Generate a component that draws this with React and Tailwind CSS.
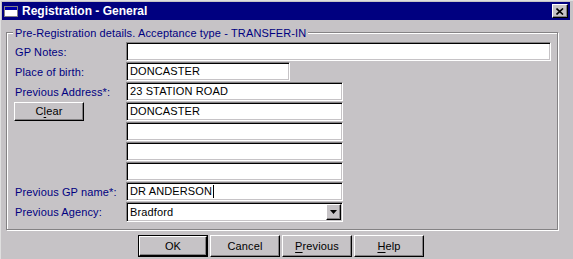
import React from "react";

const sunken =
  "border border-t-[#848284] border-l-[#848284] border-b-white border-r-white shadow-[inset_1px_1px_0_#000,inset_-1px_-1px_0_#c6c3c6]";
const raised =
  "border border-t-white border-l-white border-b-black border-r-black shadow-[inset_-1px_-1px_0_#848284]";

function Field({ w, children }) {
  return (
    <div className={`h-[19px] bg-white ${sunken} flex items-center pl-[3px] text-black ${w}`}>
      {children}
    </div>
  );
}

function Row({ label, children, left }) {
  return (
    <div className="h-[20px] flex items-start">
      <div className="w-[111px] h-[19px] flex items-center text-[#000080] shrink-0 pt-[1px]">
        {left ? left : label}
      </div>
      {children}
    </div>
  );
}

export default function App() {
  return (
    <div className="w-[573px] h-[259px] bg-[#c6c3c6] overflow-hidden font-['Liberation_Sans',Arial,sans-serif] text-[11px] tracking-[0.12px] leading-none border-t border-l border-[#dfdfdf]">
      <div className="pt-[1px] pl-[1px] pr-[3px]">
        <div className="h-[18px] bg-[#000080] flex items-center">
          <div className="ml-[2px] w-[14px] h-[11px] bg-white border border-[#848284] flex flex-col">
            <div className="h-[3px] bg-[#0000a8]" />
          </div>
          <span className="ml-[4px] text-white font-bold text-[12px] tracking-normal">Registration - General</span>
          <div className={`ml-auto mr-[2px] w-[16px] h-[14px] bg-[#c6c3c6] ${raised} flex items-center justify-center`}>
            <svg width="8" height="7" viewBox="0 0 8 7">
              <path d="M0.5 0.5 L7 6.5 M7 0.5 L0.5 6.5" stroke="#000" strokeWidth="1.6" />
            </svg>
          </div>
        </div>
      </div>
      <div className="pl-[5px]">
        <div className="relative mt-[12px] w-[552px] h-[198px] border border-[#848284] shadow-[inset_1px_1px_0_#fff,1px_1px_0_#fff] pt-[9px] pl-[8px]">
          <div className="absolute -top-[6px] left-[6px] px-[2px] bg-[#c6c3c6] text-[#000080] leading-[13px]">
            Pre-Registration details. Acceptance type - TRANSFER-IN
          </div>
          <Row label="GP Notes:">
            <Field w="w-[425px]" />
          </Row>
          <Row label="Place of birth:">
            <Field w="w-[164px]">DONCASTER</Field>
          </Row>
          <Row label="Previous Address*:">
            <Field w="w-[217px]">23 STATION ROAD</Field>
          </Row>
          <Row
            left={
              <div className={`-ml-[1px] -mt-[1px] w-[70px] h-[19px] bg-[#c6c3c6] ${raised} flex items-center justify-center text-black`}>
                C<span className="underline underline-offset-2">l</span>ear
              </div>
            }
          >
            <Field w="w-[217px]">DONCASTER</Field>
          </Row>
          <Row label="">
            <Field w="w-[217px]" />
          </Row>
          <Row label="">
            <Field w="w-[217px]" />
          </Row>
          <Row label="">
            <Field w="w-[217px]" />
          </Row>
          <Row label="Previous GP name*:">
            <Field w="w-[217px]">
              DR ANDERSON<span className="inline-block w-[1px] h-[13px] bg-black ml-[1px]" />
            </Field>
          </Row>
          <Row label="Previous Agency:">
            <div className={`h-[20px] w-[217px] bg-white ${sunken} flex items-center pl-[3px] text-black`}>
              <span>Bradford</span>
              <div className={`ml-auto mr-[1px] w-[15px] h-[16px] bg-[#c6c3c6] ${raised} flex items-center justify-center`}>
                <svg width="7" height="4" viewBox="0 0 7 4">
                  <path d="M0 0 H7 L3.5 4 Z" fill="#000" />
                </svg>
              </div>
            </div>
          </Row>
        </div>
      </div>
      <div className="mt-[5px] ml-[137px] flex gap-[2px]">
        <div className="w-[70px] h-[22px] border border-black">
          <div className={`w-full h-full bg-[#c6c3c6] ${raised} flex items-center justify-center text-black`}>OK</div>
        </div>
        <div className={`w-[70px] h-[22px] bg-[#c6c3c6] ${raised} flex items-center justify-center text-black`}>Cancel</div>
        <div className={`w-[70px] h-[22px] bg-[#c6c3c6] ${raised} flex items-center justify-center text-black`}>
          <span className="underline underline-offset-2">P</span>revious
        </div>
        <div className={`w-[70px] h-[22px] bg-[#c6c3c6] ${raised} flex items-center justify-center text-black`}>
          <span className="underline underline-offset-2">H</span>elp
        </div>
      </div>
    </div>
  );
}
